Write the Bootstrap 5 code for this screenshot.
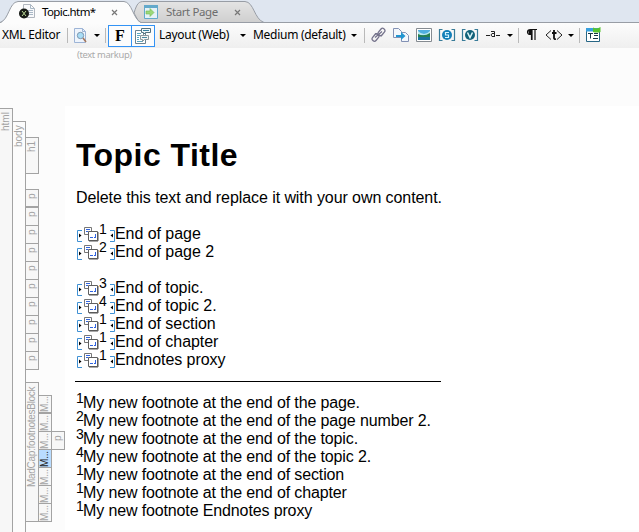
<!DOCTYPE html>
<html lang="en">
<head>
<meta charset="utf-8">
<title>XML Editor</title>
<link href="https://cdn.jsdelivr.net/npm/bootstrap@5.3.0/dist/css/bootstrap.min.css" rel="stylesheet">
<style>
body{width:639px;height:532px;background:#fcfcfc;color:#000;font-family:"Noto Sans","Open Sans",sans-serif;font-size:12px;line-height:18px}
svg{display:block;flex:none}
.tabstrip{height:23px;background:#dfe6f0;border-bottom:1px solid #989da5}
.tab{height:23px;flex:none}
.tab-active{width:142px;z-index:2}
.tab-idle{width:134px;margin-left:-12px;color:#6d6d6d}
.tab-shape{left:0;top:0}
.tab-label{font-size:11.5px;line-height:16px;white-space:nowrap;letter-spacing:-.6px}
.tab-idle .tab-label{letter-spacing:-.4px}
.tools{height:25px;background:linear-gradient(#fcfcfc,#efefef)}
.tool-label{white-space:nowrap;font-size:12px;letter-spacing:-.28px;flex:none;line-height:24px;height:25px}
.rule-v{width:1px;height:15px;background:#b9b9b9;flex:none}
.toggle{width:24px;height:22px;border:1px solid #3393f5;background:#fcfcfc;flex:none}
.toggle+.toggle{margin-left:-1px}
.bold-f{font:bold 16px/20px "Liberation Serif",serif}
.caret{width:0;height:0;border:3px solid transparent;border-top-color:#000;border-bottom:0;flex:none}
.hint{height:14px;padding-left:77px;color:#aaa;font-size:9.4px;line-height:14px;letter-spacing:-.35px}
.editor{height:424px}
.gutter{width:65px;flex:none}
.level{width:13px;flex:none}
.node{border:1px solid #a3a3a3;border-right:0;background:#f7f7f7;color:#a3a3a3;font:10px/12px "Liberation Sans",Arial,sans-serif;writing-mode:vertical-rl;transform:rotate(180deg);text-align:right;white-space:nowrap;padding-bottom:3px;width:13px}
.node-p{height:18px;border-top:0}
.node-p:last-child{border-top:1px solid #a3a3a3;height:18px}
.node-p:first-child{height:19px;border-top:1px solid #a3a3a3}
.node-m{padding-bottom:1px;letter-spacing:-.2px}
.node-long{letter-spacing:-.28px;padding-bottom:4px}
.node-on{background:#b9dcff;color:#222}
.page{background:#fff;padding:0 0 0 11px;font:16px/18px "Liberation Sans",Arial,sans-serif}
.page h1{font-size:32px;line-height:36px;font-weight:bold;letter-spacing:.45px;margin:0;padding-top:31px}
.line{height:18px;white-space:nowrap}
.intro{letter-spacing:-.075px}
.ends{letter-spacing:-.05px}
.notes{letter-spacing:-.13px}
.notes .num{width:7px;margin-right:0}
.num{font-size:14px;line-height:18px;position:relative;top:-5px;width:8px;flex:none;letter-spacing:0}
.divider{width:366px;height:1px;background:#000;margin-left:-1px}
</style>
<script src="https://cdn.jsdelivr.net/npm/bootstrap@5.3.0/dist/js/bootstrap.bundle.min.js"></script>
</head>
<body class="m-0 overflow-hidden">
<svg width="0" height="0" class="position-absolute">
<symbol id="note" viewBox="0 0 38 18"><path d="M6 5.500H1.500V16.500H6M33 5.500H37.500V16.500H33" fill="none" stroke="#3f91d4"/><path d="M3 8.500l2.500 2-2.500 2zM36 8.500l-2.500 2 2.500 2z"/><path d="M8.500 2.500h7v7h-7z" fill="#fff" stroke="#777"/><path d="M10 4.500h4M10 6.500h2" stroke="#3164df"/><path d="M12.500 6.500h9v9h-9z" fill="#fff" stroke="#606060"/><path d="M22 7v9H13" fill="none" stroke="#555"/><path d="M14 12.500h3M18 12.500h2M19.500 9v3" stroke="#3164df" fill="none"/></symbol>
</svg>
<nav class="tabstrip d-flex">
  <div class="tab tab-active position-relative d-flex">
    <svg class="tab-shape position-absolute" width="142" height="23"><path d="M0 23C9 21 9 2 18 1.500H124C132 2 133 19 141 23z" fill="#fcfcfc"/><path d="M0 22.500C9 20 9 2 18 1.500H124C132 2 133 19 141 22.500" fill="none" stroke="#989da5"/></svg>
    <div class="position-relative d-flex align-items-start">
      <svg width="42" height="23"><path d="M23.500 4.500h7l4 4v9h-11z" fill="#f8f9fb" stroke="#b0b6be"/><path d="M30.500 4.500v4h4M26 10.500h7M26 12.500h7M26 14.500h7" stroke="#a9b8c6" fill="none"/><circle cx="24" cy="13.500" r="5" fill="#171b17"/><path d="M22 11l4 5M26 11l-4 5" stroke="#bddb99" stroke-width="1"/></svg>
      <span class="tab-label pt-1">Topic.htm*</span>
    </div>
    <svg class="position-absolute top-0 start-0" width="142" height="23"><path d="M112 10l5 5M117 10l-5 5" stroke="#777" stroke-width="1.200"/></svg>
  </div>
  <div class="tab tab-idle position-relative d-flex">
    <svg class="tab-shape position-absolute" width="134" height="23"><defs><linearGradient id="g" x2="0" y2="1"><stop stop-color="#e4e4e4"/><stop offset="1" stop-color="#cfcfcf"/></linearGradient></defs><path d="M4 13C7 3 9 1.500 14 1.500H115C124 2 124 19 134 22.500H9z" fill="url(#g)" stroke="#989da5"/></svg>
    <div class="position-relative d-flex align-items-start">
      <svg width="36" height="23"><path d="M14.500 5.500h13v13h-13z" fill="#e5f2f7" stroke="#63a9cb"/><path d="M14 5h14v3H14z" fill="#63a9cb"/><path d="M16 11h4V8.500l4 4-4 4V14h-4z" fill="#9bd879" stroke="#74bb4d" stroke-width=".6"/></svg>
      <span class="tab-label pt-1">Start Page</span>
    </div>
    <svg class="position-absolute top-0 start-0" width="134" height="23"><path d="M105 10l5 5M110 10l-5 5" stroke="#777" stroke-width="1.200"/></svg>
  </div>
</nav>
<header class="tools d-flex align-items-center">
  <span class="tool-label" style="width:67px;padding-left:2px">XML Editor</span>
  <i class="rule-v"></i>
  <svg width="26" height="18"><path d="M6.500 1.500h8l3 3v11h-11z" fill="#eef4fc" stroke="#9db4d6"/><path d="M14.500 1.500v3h3" fill="none" stroke="#9db4d6"/><circle cx="12.500" cy="8.500" r="3.200" fill="#a8dcf5" stroke="#7d97b0"/><path d="M15 11l3 4" stroke="#a3765c" stroke-width="1.600"/></svg>
  <i class="caret"></i><i class="rule-v" style="margin:0 2px 0 5px"></i>
  <div class="toggle d-flex justify-content-center"><span class="bold-f">F</span></div>
  <div class="toggle"><svg width="22" height="20"><path d="M3.500 4.500h10v13h-10z" fill="#fff" stroke="#6b8290"/><path d="M5 7.500h4M5 9.500h3M5 11.500h2M5 13.500h2M5 15.500h6" stroke="#5ba5bd"/><path d="M9.500 2.500v4h2v2l2-2h5v-4z" fill="#eef7fa" stroke="#55727f"/><path d="M11 4.500h6" stroke="#367e9c"/><path d="M8.500 9.500h8v4h-4l-2 2v-2h-2z" fill="#f4f4f4" stroke="#8a979c"/><path d="M10 11.500h5" stroke="#4a8aa1"/></svg></div>
  <span class="tool-label" style="width:85px;padding-left:4px">Layout (Web)</span><i class="caret"></i>
  <span class="tool-label" style="width:105px;padding-left:7px">Medium (default)</span><i class="caret"></i>
  <i class="rule-v" style="margin-left:7px"></i>
  <svg width="144" height="24" viewBox="365 24 144 24">
    <g fill="none" stroke="#74728b" stroke-width="1.300"><rect x="-4" y="-2.300" width="8" height="4.600" rx="2" transform="translate(375.500 37.500) rotate(-50)"/><rect x="-4" y="-2.300" width="8" height="4.600" rx="2" transform="translate(381.500 32) rotate(-50)"/><path d="M375 37.500l7-6M375 33.500l7 2.500"/></g>
    <path d="M393.500 28.500h5l3 3v6h-8zM401.500 32.500h4l3 3v6h-7z" fill="#f3f7fc" stroke="#8291b4"/><path d="M396 35h5v-3l4.500 4-4.500 4v-3h-5z" fill="#2195d0"/>
    <path d="M416.500 28.500h15v13h-15z" fill="#fff" stroke="#858b91"/><path d="M418 30h12v10h-12z" fill="#50afe0"/><path d="M418 31q6 6 12 0v4h-12z" fill="#b9e8ef"/><path d="M418 34q6 3 12-1v4h-12z" fill="#278052"/><path d="M418 37h12v3h-12z" fill="#1c739f"/>
    <path d="M442.500 29.500h-3v11h3M451.500 29.500h3v11h-3M465.500 29.500h-3v11h3M474.500 29.500h3v11h-3" fill="none" stroke="#397c99" stroke-width="1.200"/><circle cx="447" cy="35" r="5" fill="#147fb8"/><circle cx="470" cy="35" r="5" fill="#126178"/><path d="M449 32.500h-3.500v2.500h3v2.500H445" fill="none" stroke="#d6f4ff" stroke-width="1.200"/><path d="M467.500 32.500l2.500 5 2.500-5" fill="none" stroke="#e1f8fc" stroke-width="1.500"/>
    <path d="M486 35.500h4M496 35.500h4M491 31.500h3.500v5M495 33.500h-3l-1 1.500 1 1.500h3" fill="none" stroke="#222"/>
  </svg>
  <i class="caret" style="margin-left:-2px"></i><i class="rule-v" style="margin-left:5px"></i>
  <svg width="49" height="24" viewBox="519 24 49 24"><path d="M537 29.500h-6.500q-3 0-3 2.500t3 2.500h1V40M532 29.500V40M535 29.500V40" fill="none" stroke="#111" stroke-width="1.200"/><path d="M528 30h4v4h-3z" fill="#111"/><path d="M551 30.500l-5 4.500 5 4.500M557 30.500l5 4.500-5 4.500" fill="none" stroke="#222"/><path d="M554 30v8q0 1.500 2 1M552 33h4.500" fill="none" stroke="#111" stroke-width="1.800"/></svg>
  <i class="caret"></i><i class="rule-v" style="margin-left:5px"></i>
  <svg width="30" height="24" viewBox="580 24 30 24"><path d="M586.500 28.500h13v13h-13z" fill="#fff" stroke="#276685"/><path d="M586 28h14v3.500h-14z" fill="#38a0df"/><path d="M593 27.500q4 2 7.500-.500v5q-4 1-7.500 0z" fill="#56c32f"/><path d="M588 33.500h5M590.500 33.500v5M594 33.500h4M594 35.500h4M593 38.500h5" fill="none" stroke="#173746"/></svg>
</header>
<div class="hint">(text markup)</div>
<main class="editor d-flex" style="margin-top:44px">
  <aside class="gutter d-flex">
    <div class="level" style="padding-top:2px"><div class="node" style="height:440px">html</div></div>
    <div class="level" style="padding-top:15px"><div class="node" style="height:430px;background:#fcfcfc">body</div></div>
    <div class="level" style="padding-top:31px">
      <div class="node" style="height:37px;margin-bottom:15px">h1</div>
      <div class="d-flex flex-column-reverse">
        <div class="node node-p">p</div><div class="node node-p">p</div><div class="node node-p">p</div><div class="node node-p">p</div><div class="node node-p">p</div><div class="node node-p">p</div><div class="node node-p">p</div><div class="node node-p">p</div><div class="node node-p">p</div><div class="node node-p">p</div>
      </div>
      <div class="node node-long" style="height:140px;margin-top:12px">MadCap:footnotesBlock</div>
    </div>
    <div class="level d-flex flex-column-reverse" style="height:416px">
      <div class="node node-p node-m">M...</div><div class="node node-p node-m">M...</div><div class="node node-p node-m">M...</div><div class="node node-p node-m node-on">M...</div><div class="node node-p node-m">M...</div><div class="node node-p node-m">M...</div><div class="node node-p node-m">M...</div>
    </div>
    <div class="level" style="padding-top:325px"><div class="node" style="height:19px">p</div></div>
  </aside>
  <article class="page flex-fill">
    <h1>Topic Title</h1>
    <div class="line intro" style="margin-top:16px">Delete this text and replace it with your own content.</div>
    <section class="ends" style="margin-top:18px">
      <div class="line d-flex"><svg width="23" height="18" viewBox="0 0 23 18"><use href="#note" width="38" height="18"/></svg><span class="num">1</span><svg width="8" height="18" viewBox="30 0 8 18"><use href="#note" width="38" height="18"/></svg><span>End of page</span></div>
      <div class="line d-flex"><svg width="23" height="18" viewBox="0 0 23 18"><use href="#note" width="38" height="18"/></svg><span class="num">2</span><svg width="8" height="18" viewBox="30 0 8 18"><use href="#note" width="38" height="18"/></svg><span>End of page 2</span></div>
      <div class="line"></div>
      <div class="line d-flex"><svg width="23" height="18" viewBox="0 0 23 18"><use href="#note" width="38" height="18"/></svg><span class="num">3</span><svg width="8" height="18" viewBox="30 0 8 18"><use href="#note" width="38" height="18"/></svg><span>End of topic.</span></div>
      <div class="line d-flex"><svg width="23" height="18" viewBox="0 0 23 18"><use href="#note" width="38" height="18"/></svg><span class="num">4</span><svg width="8" height="18" viewBox="30 0 8 18"><use href="#note" width="38" height="18"/></svg><span>End of topic 2.</span></div>
      <div class="line d-flex"><svg width="23" height="18" viewBox="0 0 23 18"><use href="#note" width="38" height="18"/></svg><span class="num">1</span><svg width="8" height="18" viewBox="30 0 8 18"><use href="#note" width="38" height="18"/></svg><span>End of section</span></div>
      <div class="line d-flex"><svg width="23" height="18" viewBox="0 0 23 18"><use href="#note" width="38" height="18"/></svg><span class="num">1</span><svg width="8" height="18" viewBox="30 0 8 18"><use href="#note" width="38" height="18"/></svg><span>End of chapter</span></div>
      <div class="line d-flex"><svg width="23" height="18" viewBox="0 0 23 18"><use href="#note" width="38" height="18"/></svg><span class="num">1</span><svg width="8" height="18" viewBox="30 0 8 18"><use href="#note" width="38" height="18"/></svg><span>Endnotes proxy</span></div>
    </section>
    <div class="divider" style="margin-top:12px;margin-bottom:12px"></div>
    <section class="notes">
    <div class="line d-flex"><span class="num">1</span><span>My new footnote at the end of the page.</span></div>
    <div class="line d-flex"><span class="num">2</span><span>My new footnote at the end of the page number 2.</span></div>
    <div class="line d-flex"><span class="num">3</span><span>My new footnote at the end of the topic.</span></div>
    <div class="line d-flex"><span class="num">4</span><span>My new footnote at the end of the topic 2.</span></div>
    <div class="line d-flex"><span class="num">1</span><span>My new footnote at the end of section</span></div>
    <div class="line d-flex"><span class="num">1</span><span>My new footnote at the end of chapter</span></div>
    <div class="line d-flex"><span class="num">1</span><span>My new footnote Endnotes proxy</span></div>
    </section>
  </article>
</main>
</body>
</html>
